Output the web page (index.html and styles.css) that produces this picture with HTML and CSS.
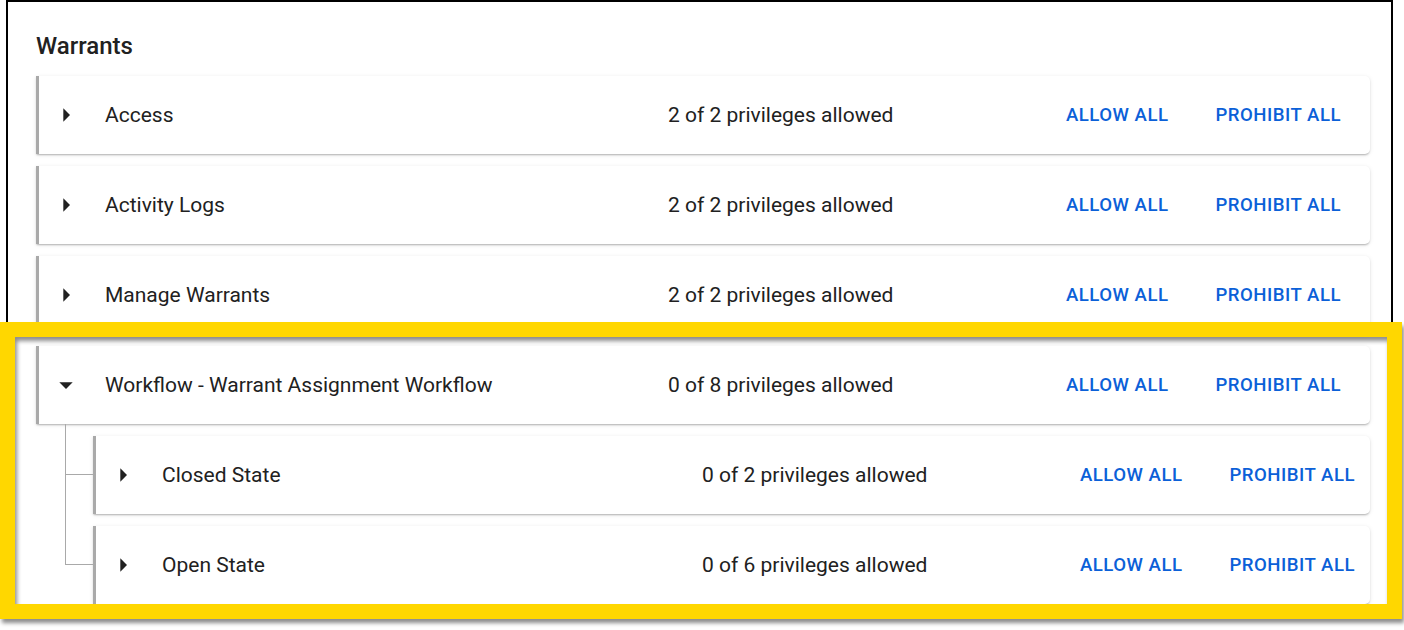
FILE: index.html
```html
<!DOCTYPE html>
<html lang="en">
<head>
<meta charset="utf-8">
<title>Warrants</title>
<link rel="stylesheet" href="styles.css">
</head>
<body>
<div class="frame">
  <h2 class="heading">Warrants</h2>
  <div class="card">
    <div class="row">
      <svg class="caret" viewBox="0 0 24 24"><path d="M10 17l5-5-5-5v10z"/></svg>
      <span class="title">Access</span>
      <span class="summary">2 of 2 privileges allowed</span>
      <div class="actions"><button class="btn">Allow all</button><button class="btn">Prohibit all</button></div>
    </div>
  </div>
  <div class="card">
    <div class="row">
      <svg class="caret" viewBox="0 0 24 24"><path d="M10 17l5-5-5-5v10z"/></svg>
      <span class="title">Activity Logs</span>
      <span class="summary">2 of 2 privileges allowed</span>
      <div class="actions"><button class="btn">Allow all</button><button class="btn">Prohibit all</button></div>
    </div>
  </div>
  <div class="card">
    <div class="row">
      <svg class="caret" viewBox="0 0 24 24"><path d="M10 17l5-5-5-5v10z"/></svg>
      <span class="title">Manage Warrants</span>
      <span class="summary">2 of 2 privileges allowed</span>
      <div class="actions"><button class="btn">Allow all</button><button class="btn">Prohibit all</button></div>
    </div>
  </div>
  <div class="card">
    <div class="row">
      <svg class="caret" viewBox="0 0 24 24"><path d="M7 10l5 5 5-5z"/></svg>
      <span class="title">Workflow - Warrant Assignment Workflow</span>
      <span class="summary">0 of 8 privileges allowed</span>
      <div class="actions"><button class="btn">Allow all</button><button class="btn">Prohibit all</button></div>
    </div>
  </div>
  <div class="children">
    <div class="card child">
      <div class="row">
        <svg class="caret" viewBox="0 0 24 24"><path d="M10 17l5-5-5-5v10z"/></svg>
        <span class="title">Closed State</span>
        <span class="summary">0 of 2 privileges allowed</span>
        <div class="actions"><button class="btn">Allow all</button><button class="btn">Prohibit all</button></div>
      </div>
    </div>
    <div class="card child">
      <div class="row">
        <svg class="caret" viewBox="0 0 24 24"><path d="M10 17l5-5-5-5v10z"/></svg>
        <span class="title">Open State</span>
        <span class="summary">0 of 6 privileges allowed</span>
        <div class="actions"><button class="btn">Allow all</button><button class="btn">Prohibit all</button></div>
      </div>
    </div>
  </div>
</div>
<div class="highlight"></div>
</body>
</html>
```
FILE: styles.css
```css
html, body {
  margin: 0;
  padding: 0;
  background: #ffffff;
}
body {
  position: relative;
  width: 1404px;
  height: 630px;
  overflow: hidden;
  font-family: Roboto, "Liberation Sans", sans-serif;
  color: #212121;
}
.frame {
  box-sizing: border-box;
  margin-left: 6px;
  width: 1387px;
  height: 612px;
  border: 2px solid #000;
  border-bottom: none;
  padding: 0 21px 0 28px;
  overflow: hidden;
}
.heading {
  margin: 28px 0 14px 0;
  font-size: 24px;
  line-height: 32px;
  font-weight: 500;
  color: #212121;
}
.card {
  position: relative;
  background: #fff;
  border-left: 3px solid #a9a9a9;
  border-radius: 0 5px 5px 0;
  margin-bottom: 12px;
  box-shadow: 0 2px 2px -1px rgba(0,0,0,0.18), 0 1px 2px rgba(0,0,0,0.10), 0 1px 5px rgba(0,0,0,0.08);
}
.row {
  display: flex;
  align-items: center;
  height: 78px;
  padding: 0 18px 0 11px;
  font-size: 21px;
}
.caret {
  width: 32px;
  height: 32px;
  flex: none;
  fill: #212121;
}
.title {
  margin-left: 23px;
  width: 563px;
  flex: none;
  white-space: nowrap;
}
.summary {
  flex: 1;
  white-space: nowrap;
}
.actions {
  display: flex;
  gap: 25px;
}
.btn {
  border: none;
  background: none;
  padding: 0 11px;
  font-family: Roboto, "Liberation Sans", sans-serif;
  font-size: 18.6px;
  font-weight: 500;
  letter-spacing: 0.5px;
  text-transform: uppercase;
  color: #0b60d8;
  line-height: 36px;
  cursor: pointer;
}
.children {
  margin-left: 57px;
}
.child .row {
  padding-right: 4px;
}
.child .title {
  width: 540px;
}
.child::before {
  content: "";
  position: absolute;
  left: -31px;
  top: -52px;
  width: 28px;
  height: 90px;
  border-left: 1px solid #a9a9a9;
  border-bottom: 1px solid #a9a9a9;
}
.child:first-child::before {
  top: -12px;
  height: 50px;
}
.highlight {
  position: absolute;
  left: 0;
  top: 322px;
  width: 1402px;
  height: 297px;
  box-sizing: border-box;
  border: 15px solid #ffd700;
  box-shadow: 2px 4px 4px rgba(0,0,0,0.45), inset 2px 4px 4px rgba(0,0,0,0.45);
  pointer-events: none;
}
```
